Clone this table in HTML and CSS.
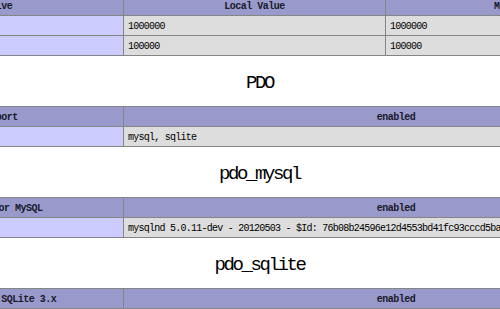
FILE: index.html
```html
<!DOCTYPE html>
<html>
<head>
<meta charset="utf-8">
<link rel="stylesheet" href="styles.css">
</head>
<body>
<div class="page">
  <table class="info first">
    <colgroup><col class="c1"><col class="c2"><col class="c3"></colgroup>
    <tr class="h"><th>Directive</th><th>Local Value</th><th>Master Value</th></tr>
    <tr><td class="e">pdo_mysql.cache_size</td><td class="v">1000000</td><td class="v">1000000</td></tr>
    <tr><td class="e">pdo_mysql.default_socket</td><td class="v">100000</td><td class="v">100000</td></tr>
  </table>

  <h2>PDO</h2>
  <table class="info">
    <colgroup><col class="c1"><col class="c23"></colgroup>
    <tr class="h"><th>PDO support</th><th>enabled</th></tr>
    <tr><td class="e">PDO drivers </td><td class="v">mysql, sqlite</td></tr>
  </table>

  <h2>pdo_mysql</h2>
  <table class="info">
    <colgroup><col class="c1"><col class="c23"></colgroup>
    <tr class="h"><th>PDO Driver for MySQL</th><th>enabled</th></tr>
    <tr><td class="e">Client API version </td><td class="v">mysqlnd 5.0.11-dev - 20120503 - $Id: 76b08b24596e12d4553bd41fc93cccd5bac2fe7a $</td></tr>
  </table>

  <h2>pdo_sqlite</h2>
  <table class="info">
    <colgroup><col class="c1"><col class="c23"></colgroup>
    <tr class="h"><th>PDO Driver for SQLite 3.x</th><th>enabled</th></tr>
    <tr><td class="e">SQLite Library </td><td class="v">3.8.10.2</td></tr>
  </table>
</div>
</body>
</html>
```
FILE: styles.css
```css
html, body {
  margin: 0;
  padding: 0;
  background: #ffffff;
  overflow: hidden;
}
.page {
  width: 817px;
  margin-left: -149px;
  font-family: "Liberation Mono", monospace;
  color: #000000;
}
.info {
  width: 817px;
  table-layout: fixed;
  border-collapse: collapse;
}
.first {
  margin-top: -5px;
}
.c1 { width: 272px; }
.c2 { width: 262px; }
.c3 { width: 283px; }
.c23 { width: 545px; }
.info th, .info td {
  border: 1px solid #858585;
  height: 17px;
  padding: 2px 4px 0 4px;
  line-height: 17px;
  font-size: 10px;
  letter-spacing: -0.75px;
  white-space: nowrap;
  overflow: hidden;
  vertical-align: top;
}
.h th {
  background: #9999cc;
  font-weight: bold;
  text-align: center;
  color: #1a1a2a;
  letter-spacing: -0.5px;
}
.e {
  background: #ccccff;
  font-weight: bold;
}
.v {
  background: #dddddd;
  text-align: left;
}
h2 {
  margin: 0;
  padding: 15px 0 11px 0;
  line-height: 24px;
  font-size: 19px;
  font-weight: normal;
  letter-spacing: -2.4px;
  text-align: center;
  font-family: "Liberation Mono", monospace;
}
```
